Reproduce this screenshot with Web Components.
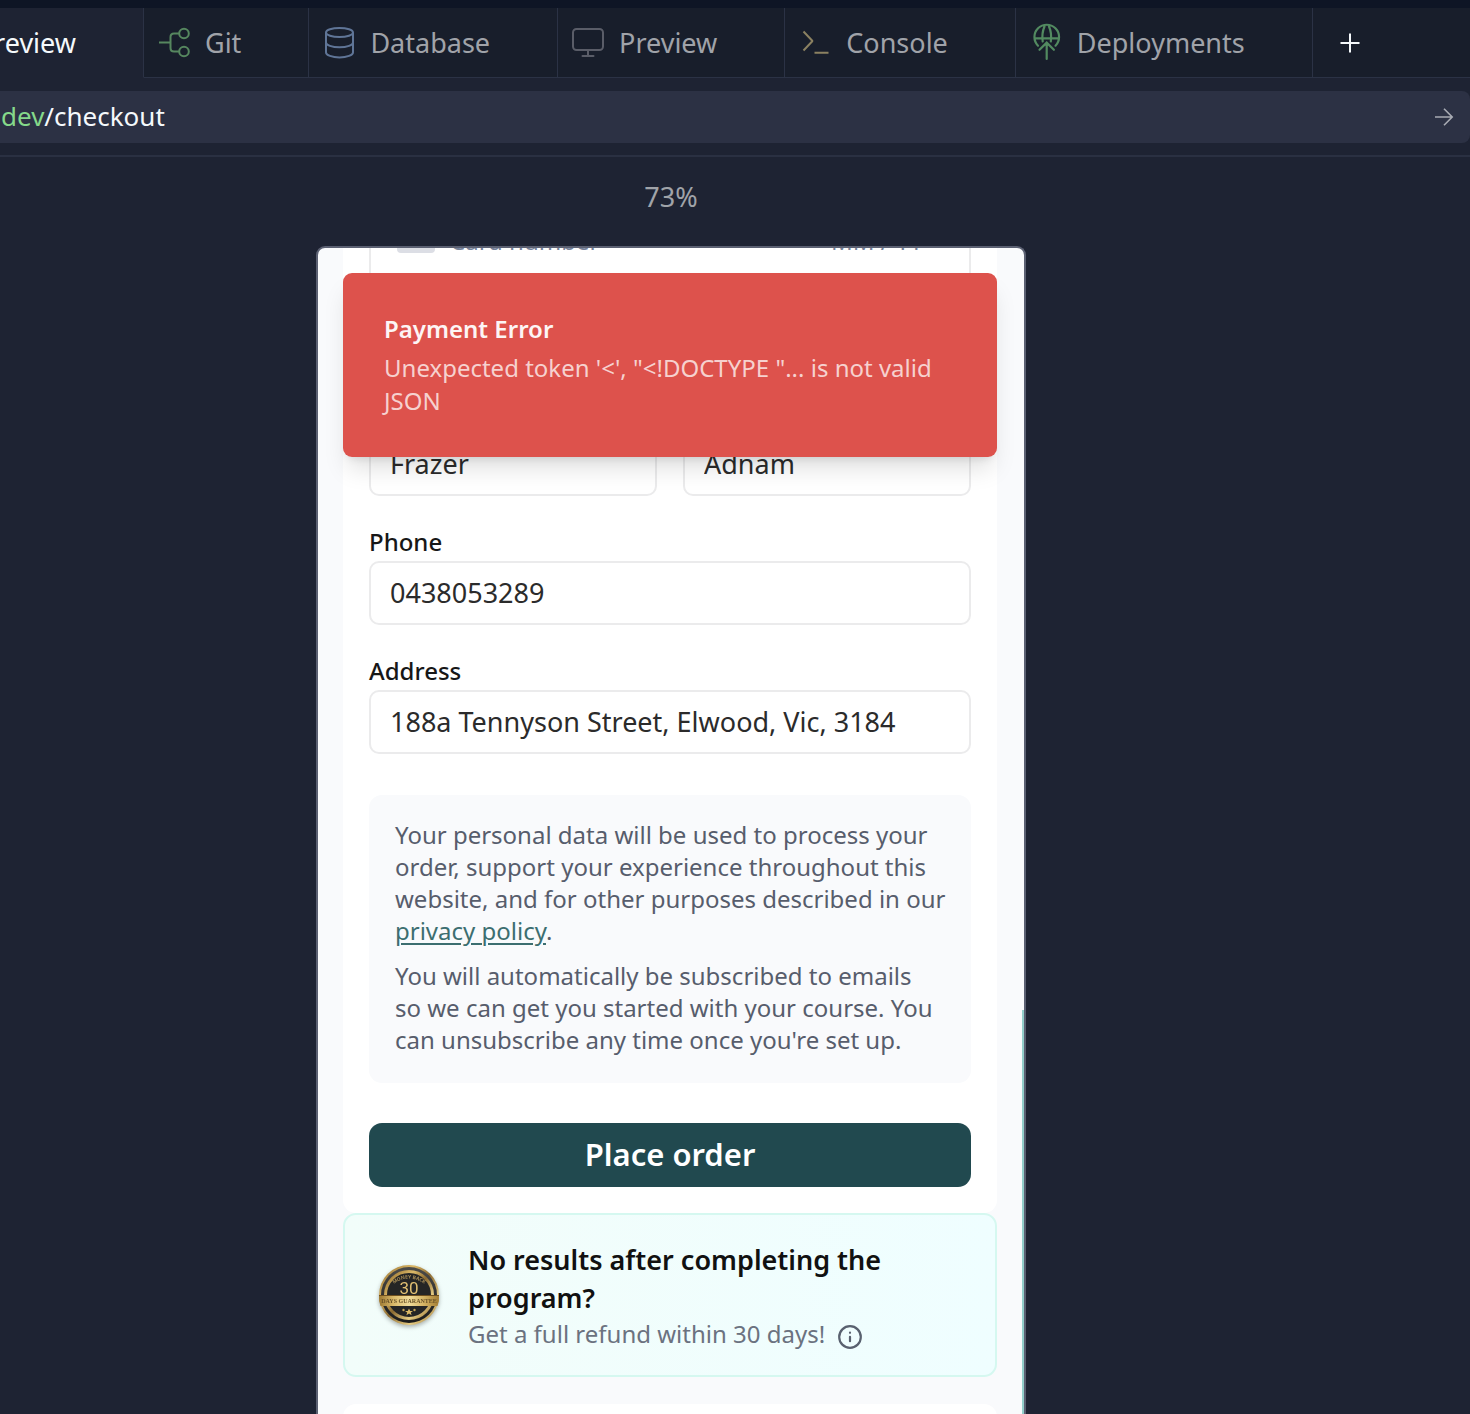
<!DOCTYPE html>
<html lang="en">
<head>
<meta charset="utf-8">
<title>Preview</title>
<style>
  body { margin: 0; background: #1e2333; }
</style>
</head>
<body>
<ide-window>
  <ide-tabs slot="tabs">
    <ide-tab active>Preview</ide-tab>
    <ide-tab icon="git">Git</ide-tab>
    <ide-tab icon="database">Database</ide-tab>
    <ide-tab icon="monitor">Preview</ide-tab>
    <ide-tab icon="console">Console</ide-tab>
    <ide-tab icon="deploy">Deployments</ide-tab>
  </ide-tabs>
  <address-bar slot="address" tld="dev" path="/checkout"></address-bar>
  <device-frame zoom="73%">
    <toast-message slot="toast" heading="Payment Error">Unexpected token '&lt;', "&lt;!DOCTYPE "... is not valid JSON</toast-message>
    <checkout-form></checkout-form>
    <guarantee-card heading="No results after completing the program?">Get a full refund within 30 days!</guarantee-card>
    <next-card></next-card>
  </device-frame>
</ide-window>

<script>
const icons = {
  git: ['#56875f', '<path d="M0 15.5H11.5M20 6.5H15Q11.500 6.500 11.500 10V21Q11.500 24.500 15 24.500H20"/><circle cx="25" cy="6.500" r="4.800"/><circle cx="25" cy="24.500" r="4.800"/>'],
  database: ['#5f7597', '<ellipse cx="15.500" cy="5.500" rx="13.500" ry="4.500"/><path d="M2 5.500V25.500C2 28 8 30.500 15.500 30.500S29 28 29 25.500V5.500M2 15.500C2 18 8 20.300 15.500 20.300S29 18 29 15.500"/>'],
  monitor: ['#5a5d68', '<rect x="0" y="2" width="30" height="21" rx="3.500"/><path stroke-linecap="round" d="M15 23V29M9.500 29H20.500"/>'],
  console: ['#8b8161', '<path stroke-linejoin="bevel" d="M3.500 4.500L12.500 14L3.500 23.500M14.500 25.700H28.500"/>'],
  deploy: ['#528a60', '<path stroke-width="2.200" stroke-linecap="round" d="M7 18.700A12.300 12.300 0 1 1 24.500 18.700M3.500 11.300H28M13.500 -.500C11.500 4 10.900 9 11.700 14.500M18 -.500C20 4 20.600 9 19.800 14.500M15.700 15.500V32M8.500 22.800L15.700 15.600L22.900 22.800"/>']
};

function define(name, html, setup) {
  const template = document.createElement('template');
  template.innerHTML = '<style>*{box-sizing:border-box}</style>' + html;
  customElements.define(name, class extends HTMLElement {
    connectedCallback() {
      if (this.shadowRoot) return;
      const root = this.attachShadow({ mode: 'open' });
      root.append(template.content.cloneNode(true));
      if (setup) setup(this, root);
    }
  });
}

define('ide-window', `
<style>
  :host { box-sizing: border-box; display: flex; flex-direction: column; height: 100vh; overflow: hidden; background: #1e2333;
    border-top: 8px solid #0e1525; font-family: "Noto Sans", sans-serif; }
  header { flex: none; border-bottom: 2px solid #2a3042; padding-bottom: 12px; }
  main { flex: 1; min-height: 0; display: flex; flex-direction: column; }
</style>
<header><slot name="tabs"></slot><slot name="address"></slot></header>
<main><slot></slot></main>`);

define('ide-tabs', `
<style>
  :host { display: flex; height: 70px; margin-bottom: 13px; }
  nav { display: flex; flex: none; }
  .rest { flex: 1; background: #181e2b; border-bottom: 1px solid #2b3245; display: flex; }
  button { width: 74px; padding: 0; border: 0; background: none; display: flex; align-items: center; justify-content: center; }
</style>
<nav aria-label="Tools"><slot></slot></nav>
<div class="rest"><button type="button" aria-label="New tab">
  <svg width="20" height="20" viewBox="0 0 20 20" stroke="#f5f9fc" stroke-width="2"><path d="M10 0.500V19.500M0.500 10H19.500"/></svg>
</button></div>`);

define('ide-tab', `
<style>
  :host { display: flex; background: #181e2b; border-right: 1px solid #2b3245; border-bottom: 1px solid #2b3245; }
  :host([active]) { background: #1e2333; border-bottom-color: #1e2333; width: 143px; overflow: hidden; justify-content: flex-end; }
  button { display: flex; align-items: center; gap: 14px; flex: none; padding: 0 67px 0 15px; border: 0; background: none;
    font: 400 27px/36px "Noto Sans", sans-serif; color: #a0a3a9; }
  :host([active]) button { color: #f5f9fc; }
  svg { display: block; overflow: visible; }
</style>
<button type="button"><slot></slot></button>`, (host, root) => {
  const icon = icons[host.getAttribute('icon')];
  if (icon) root.querySelector('button').insertAdjacentHTML('afterbegin',
    '<svg width="32" height="32" viewBox="0 0 32 32" fill="none" stroke-width="2" stroke="' + icon[0] + '">' + icon[1] + '</svg>');
});

define('address-bar', `
<style>
  :host { display: flex; align-items: center; justify-content: space-between; height: 52px; padding: 0 16px 0 1px;
    background: #2c3144; border-radius: 0 8px 8px 0; font: 400 26px/36px "Noto Sans", sans-serif; color: #f5f9fc; }
  div { padding-bottom: 2px; }
  .tld { color: #85d98a; }
  button { display: flex; padding: 0; border: 0; background: none; }
</style>
<div><span class="tld"></span><span class="path"></span></div>
<button type="button" aria-label="Go"><svg width="20" height="20" viewBox="0 0 20 20" fill="none" stroke="#a8abb3" stroke-width="1.6"><path d="M1 10H18M10 1.800L18.200 10L10 18.200"/></svg></button>`,
(host, root) => {
  root.querySelector('.tld').textContent = host.getAttribute('tld');
  root.querySelector('.path').textContent = host.getAttribute('path');
});

define('device-frame', `
<style>
  :host { flex: 1; min-height: 0; display: flex; flex-direction: column; align-items: center; padding-right: 128px; }
  .zoom { flex: none; height: 89px; padding-top: 22px; font: 400 27px/36px "Noto Sans", sans-serif; color: #a0a3a9; }
  .screen { position: relative; flex: 1; min-height: 0; width: 100%; max-width: 710px; overflow: hidden;
    border: 2px solid #5b6072; border-bottom: 0; border-radius: 9px 9px 0 0; background: #f9fafc; padding: 0 27px 0 25px; }
  .edge { position: absolute; right: 0; top: 762px; bottom: 0; width: 2px; background: #93cfcb; }
  slot[name="toast"] { position: absolute; left: 25px; right: 27px; top: 25px; display: block; }
</style>
<div class="zoom"></div>
<div class="screen"><slot></slot><slot name="toast"></slot><div class="edge"></div></div>`,
(host, root) => { root.querySelector('.zoom').textContent = host.getAttribute('zoom'); });

define('toast-message', `
<style>
  :host { display: block; padding: 39px 41px 40px; border-radius: 9px; background: #dd524c; color: #f6d1cf;
    box-shadow: 0 16px 24px -5px rgba(0,0,0,.13), 0 6px 10px -6px rgba(0,0,0,.14); font: 400 24px/33px "Noto Sans", sans-serif; }
  strong { display: block; font-weight: 600; color: #fdf5f5; margin-bottom: 6px; }
</style>
<strong></strong><slot></slot>`,
(host, root) => { host.setAttribute('role', 'alert'); root.querySelector('strong').textContent = host.getAttribute('heading'); });

define('text-field', `
<style>
  :host { display: block; min-width: 0; font-family: "Noto Sans", sans-serif; }
  label { display: block; font-size: 24px; line-height: 32px; font-weight: 500; color: #171717; margin-bottom: 3px; }
  label:empty { display: none; }
  input { display: block; width: 100%; height: 64px; padding: 0 19px 2px; border: 2px solid #ebebec; border-radius: 10px;
    background: #fff; font: 400 27px/36px "Noto Sans", sans-serif; color: #2b2b2b; }
</style>
<label for="field"></label><input id="field" type="text">`,
(host, root) => {
  const input = root.querySelector('input');
  root.querySelector('label').textContent = host.getAttribute('label') || '';
  if (host.hasAttribute('name-hint')) input.setAttribute('aria-label', host.getAttribute('name-hint'));
  input.value = host.getAttribute('value');
});

define('card-field', `
<style>
  :host { display: flex; height: 80px; padding: 0 26px; border: 2px solid #ebebec; border-radius: 10px; background: #fff; }
  svg { flex: none; margin: 17px 15px 0 0; }
  input { height: 60px; min-width: 0; padding: 0; border: 0; background: none; font: 400 24px/32px "Noto Sans", sans-serif; color: #2b2b2b; }
  input::placeholder { color: #76829a; opacity: 1; }
  .number { flex: 1; }
  .expiry { width: 112px; }
</style>
<svg width="38" height="26" viewBox="0 0 38 26"><rect width="38" height="26" rx="4" fill="#dcdee5"/></svg>
<input class="number" type="text" placeholder="Card number" aria-label="Card number">
<input class="expiry" type="text" placeholder="MM / YY" aria-label="Expiry date">`);

define('checkout-form', `
<style>
  :host { display: block; margin-top: -40px; padding: 0 26px 26px; background: #fff; border-radius: 0 0 13px 13px; font-family: "Noto Sans", sans-serif; }
  form { display: flex; flex-direction: column; gap: 30px; }
  .names { display: grid; grid-template-columns: 1fr 1fr; gap: 26px; margin-top: 114px; }
  .note { margin-top: 11px; padding: 24px 24px 27px 26px; border-radius: 13px; background: #f9fafc; font-size: 24px; line-height: 32px; color: #575d6c; }
  p { margin: 0; }
  p + p { margin-top: 13px; }
  a { color: #3c6e70; text-decoration: underline; text-decoration-thickness: 2px; text-underline-offset: 3px; }
  button { height: 64px; margin-top: 10px; padding: 0 0 2px; border: 0; border-radius: 13px; background: #21494f; color: #fff; font: 600 31px/40px "Noto Sans", sans-serif; }
</style>
<form>
  <card-field></card-field>
  <div class="names">
    <text-field name-hint="First name" value="Frazer"></text-field>
    <text-field name-hint="Last name" value="Adnam"></text-field>
  </div>
  <text-field label="Phone" value="0438053289"></text-field>
  <text-field label="Address" value="188a Tennyson Street, Elwood, Vic, 3184"></text-field>
  <div class="note">
    <p>Your personal data will be used to process your order, support your experience throughout this website, and for other purposes described in our <a href="#privacy">privacy policy</a>.</p>
    <p>You will automatically be subscribed to emails so&nbsp;we&nbsp;can get you started with your course. You can&nbsp;unsubscribe any time once you're set up.</p>
  </div>
  <button type="button">Place order</button>
</form>`);

define('guarantee-badge', `
<style>:host { display: block; flex: none; } svg { display: block; filter: drop-shadow(0 2px 2px rgba(0,0,0,.3)); }</style>
<svg width="64" height="64" viewBox="0 0 64 64" role="img" aria-label="30 days money back guarantee">
  <defs>
    <linearGradient id="gold" x1="0" y1="0" x2="1" y2="1"><stop offset="0" stop-color="#8a6426"/><stop offset=".3" stop-color="#dcb968"/><stop offset=".5" stop-color="#8b6a31"/><stop offset=".75" stop-color="#e6cc83"/><stop offset="1" stop-color="#906b2c"/></linearGradient>
    <linearGradient id="band"><stop offset="0" stop-color="#9c7730"/><stop offset=".25" stop-color="#dcbb6c"/><stop offset=".5" stop-color="#f0dc9b"/><stop offset=".75" stop-color="#d5b363"/><stop offset="1" stop-color="#a27c33"/></linearGradient>
    <linearGradient id="dark" x1="0" y1="0" x2="0" y2="1"><stop offset="0" stop-color="#4c4b49"/><stop offset="1" stop-color="#1b1b1b"/></linearGradient>
    <path id="arc" d="M14 22Q32 7 50 22"/>
  </defs>
  <circle cx="32" cy="31" r="30" fill="url(#gold)"/>
  <circle cx="32" cy="31" r="28" fill="url(#dark)"/>
  <circle cx="32" cy="31" r="23.500" fill="#252525" stroke="url(#gold)" stroke-width="3"/>
  <text font-family="Noto Sans, sans-serif" font-size="5" font-weight="700" fill="#a58b56" text-anchor="middle"><textPath href="#arc" startOffset="50%">MONEY BACK</textPath></text>
  <text x="32" y="30" font-family="Roboto, sans-serif" font-size="17" fill="#e0bf72" text-anchor="middle">30</text>
  <path d="M2 31.500H62Q62.500 37 60.500 42H3.500Q1.500 37 2 31.500Z" fill="url(#band)"/>
  <path d="M2 31.500H62" stroke="#70501f" stroke-width="1"/>
  <text x="32" y="39" font-family="Liberation Serif, serif" font-size="6" font-weight="700" fill="#685128" text-anchor="middle">DAYS GUARANTEE</text>
  <path fill="#dcba68" d="M32 44.500L33.200 47H36L33.800 48.600L34.600 51.200L32 49.600L29.400 51.200L30.200 48.600L28 47H30.800Z"/>
  <circle cx="26.500" cy="46" r="1.200" fill="#c6a454"/><circle cx="37.500" cy="46" r="1.200" fill="#c6a454"/>
</svg>`);

define('guarantee-card', `
<style>
  :host { display: flex; align-items: center; gap: 27px; padding: 26px 32px 25px; border: 2px solid #d5f8f0; border-radius: 13px;
    background: linear-gradient(90deg, #f2fdfa, #effeff); font-family: "Noto Sans", sans-serif; }
  h2 { margin: 0; font-size: 27px; line-height: 38px; font-weight: 600; color: #111; }
  p { margin: 0; display: flex; align-items: center; gap: 12px; font-size: 24px; line-height: 33px; color: #6b7280; }
  button { display: flex; padding: 6px 0 0; border: 0; background: none; }
</style>
<guarantee-badge></guarantee-badge>
<div><h2></h2><p><span><slot></slot></span><button type="button" aria-label="Refund details">
<svg width="26" height="26" viewBox="0 0 26 26" fill="none" stroke="#59616f" stroke-width="2.200" stroke-linecap="round"><circle cx="13" cy="13" r="10.800"/><path d="M13 12.800V17.200M13 8.700V8.800"/></svg>
</button></p></div>`,
(host, root) => { root.querySelector('h2').textContent = host.getAttribute('heading'); });

define('next-card', `
<style>:host { display: block; height: 120px; margin-top: 27px; border-radius: 13px; background: #fff; }</style>`);
</script>
</body>
</html>
